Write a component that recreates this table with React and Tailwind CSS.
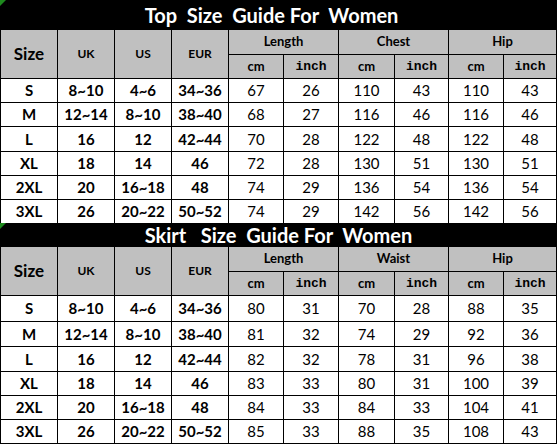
import React from "react";

const COLS = "grid-cols-[57px_57px_57px_57px_55px_55px_56px_54px_55px_53px]";
const F = { fontFamily: "Lato, 'Open Sans', sans-serif" };
const MONO = { fontFamily: "'Liberation Mono', 'Courier New', monospace" };

const top = [
  ["S", "8~10", "4~6", "34~36", "67", "26", "110", "43", "110", "43"],
  ["M", "12~14", "8~10", "38~40", "68", "27", "116", "46", "116", "46"],
  ["L", "16", "12", "42~44", "70", "28", "122", "48", "122", "48"],
  ["XL", "18", "14", "46", "72", "28", "130", "51", "130", "51"],
  ["2XL", "20", "16~18", "48", "74", "29", "136", "54", "136", "54"],
  ["3XL", "26", "20~22", "50~52", "74", "29", "142", "56", "142", "56"],
];
const skirt = [
  ["S", "8~10", "4~6", "34~36", "80", "31", "70", "28", "88", "35"],
  ["M", "12~14", "8~10", "38~40", "81", "32", "74", "29", "92", "36"],
  ["L", "16", "12", "42~44", "82", "32", "78", "31", "96", "38"],
  ["XL", "18", "14", "46", "83", "33", "80", "31", "100", "39"],
  ["2XL", "20", "16~18", "48", "84", "33", "84", "33", "104", "41"],
  ["3XL", "26", "20~22", "50~52", "85", "33", "88", "35", "108", "43"],
];

function Corner() {
  return (
    <svg className="absolute left-0 top-0" width="6" height="6" viewBox="0 0 6 6">
      <polygon points="0,0 6,0 0,6" fill="#1e8a1e" />
    </svg>
  );
}

function Section({ title, titleH, titlePad, mid, rows, rowHs }) {
  const cell = "flex items-center justify-center border-r border-b border-black";
  return (
    <div>
      <div
        className={`relative flex items-center justify-center bg-black text-white font-bold ${titleH}`}
        style={F}
      >
        <Corner />
        <span className={`whitespace-pre leading-none ${titlePad}`}>{title}</span>
      </div>
      <div className={`grid ${COLS} grid-rows-[25px_24px] border-l border-black bg-[#c0c0c0] text-black font-bold`} style={F}>
        <div className={`${cell} row-span-2 text-[17px]`}>Size</div>
        <div className={`${cell} row-span-2 text-[12px]`}>UK</div>
        <div className={`${cell} row-span-2 text-[12px]`}>US</div>
        <div className={`${cell} row-span-2 text-[12px]`}>EUR</div>
        <div className={`${cell} col-span-2 text-[13px]`}>Length</div>
        <div className={`${cell} col-span-2 text-[13px]`}>{mid}</div>
        <div className={`${cell} col-span-2 text-[13px]`}>Hip</div>
        {[0, 1, 2].map((i) => (
          <React.Fragment key={i}>
            <div className={`${cell} text-[13px]`}>cm</div>
            <div className={`${cell} text-[13px]`} style={MONO}>inch</div>
          </React.Fragment>
        ))}
      </div>
      {rows.map((r, ri) => (
        <div key={ri} className={`grid ${COLS} border-l border-black bg-white text-black ${rowHs[ri]}`} style={F}>
          {r.map((v, ci) => (
            <div
              key={ci}
              className={`${cell} ${ci < 4 ? "font-bold text-[15px]" : "font-normal text-[15px]"}`}
            >
              {v}
            </div>
          ))}
        </div>
      ))}
    </div>
  );
}

export default function App() {
  return (
    <div className="w-[557px] h-[444px] overflow-hidden bg-white">
      <Section
        title={"Top  Size  Guide For  Women"}
        titleH="h-[30px] text-[20px]"
        titlePad="pr-[14px]"
        mid="Chest"
        rows={top}
        rowHs={["h-[24px]", "h-[24px]", "h-[25px]", "h-[24px]", "h-[24px]", "h-[23px]"]}
      />
      <Section
        title={"Skirt   Size  Guide For  Women"}
        titleH="h-[24px] text-[20px]"
        titlePad="pr-[0px]"
        mid="Waist"
        rows={skirt}
        rowHs={["h-[26px]", "h-[25px]", "h-[25px]", "h-[24px]", "h-[24px]", "h-[24px]"]}
      />
    </div>
  );
}
